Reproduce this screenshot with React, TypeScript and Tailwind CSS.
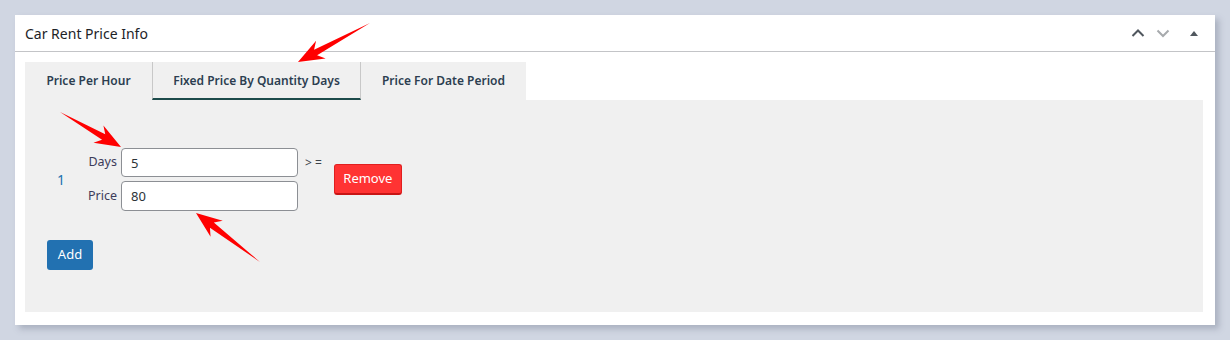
import React from "react";

function Arrow({ x1, y1, x2, y2 }: { x1: number; y1: number; x2: number; y2: number }) {
  const dx = x2 - x1;
  const dy = y2 - y1;
  const len = Math.sqrt(dx * dx + dy * dy);
  const ux = dx / len;
  const uy = dy / len;
  const px = -uy;
  const py = ux;
  const headLen = 26;
  const headW = 10;
  const shaftW = 3.2;
  const bx = x2 - ux * headLen;
  const by = y2 - uy * headLen;
  const nx = x2 - ux * (headLen - 6);
  const ny = y2 - uy * (headLen - 6);
  const pts = [
    [x1, y1],
    [nx + px * shaftW, ny + py * shaftW],
    [bx + px * headW, by + py * headW],
    [x2, y2],
    [bx - px * headW, by - py * headW],
    [nx - px * shaftW, ny - py * shaftW],
  ]
    .map((p) => p.join(","))
    .join(" ");
  return <polygon points={pts} fill="#ff0000" />;
}

export default function App() {
  return (
    <div
      className="relative w-[1230px] h-[340px] bg-[#d0d6e2] pt-[15px] pl-[15px]"
      style={{ fontFamily: '"Noto Sans", "Open Sans", sans-serif' }}
    >
      <div className="w-[1200px] h-[310px] bg-white shadow-[4px_4px_6px_rgba(100,110,130,0.35)] flex flex-col">
        <div className="h-[37px] border-b border-[#c3c4c7] flex items-center pl-[10px] pr-[16px]">
          <div className="text-[14px] text-[#1d2327] leading-none pt-[1px]">Car Rent Price Info</div>
          <div className="ml-auto flex items-center">
            <svg width="16" height="16" viewBox="0 0 16 16" className="mr-[9px]">
              <path d="M2.5 11 L8 5.5 L13.5 11" stroke="#50575e" strokeWidth="2" fill="none" />
            </svg>
            <svg width="16" height="16" viewBox="0 0 16 16" className="mr-[18px]">
              <path d="M2.5 5.5 L8 11 L13.5 5.5" stroke="#a7aaad" strokeWidth="2" fill="none" />
            </svg>
            <svg width="10" height="10" viewBox="0 0 10 10">
              <path d="M1 8 L5 3 L9 8 Z" fill="#50575e" />
            </svg>
          </div>
        </div>
        <div className="pt-[10px] pl-[10px] pr-[12px] pb-[13px] flex-1 flex flex-col">
          <div className="flex h-[38px]">
            <div className="w-[127px] bg-[#f0f0f0] flex items-center justify-center text-[12px] font-semibold text-[#2c3e50]">
              Price Per Hour
            </div>
            <div className="w-[209px] bg-[#f0f0f0] border-l border-r border-[#c8c8c8] border-b-2 border-b-[#1d4b4b] flex items-center justify-center text-[12px] font-semibold text-[#2c3e50] pt-[2px]">
              Fixed Price By Quantity Days
            </div>
            <div className="w-[165px] bg-[#f0f0f0] flex items-center justify-center text-[12px] font-semibold text-[#2c3e50]">
              Price For Date Period
            </div>
          </div>
          <div className="flex-1 bg-[#f0f0f0] pl-[22px] pt-[48px]">
            <div className="flex items-center">
              <div className="w-[30px] text-[14px] text-[#2271b1] pl-[10px]">1</div>
              <div className="flex flex-col gap-[4px]">
                <div className="flex items-center">
                  <span className="text-[12.5px] text-[#3c3c5a] w-[44px] text-right pr-[4px]">Days</span>
                  <input
                    defaultValue="5"
                    className="w-[177px] h-[29px] bg-white border border-[#8c8f94] rounded-[4px] px-[9px] text-[13px] text-[#2c3338] outline-none"
                  />
                  <span className="text-[12px] text-[#3c434a] ml-[7px]">&gt; =</span>
                </div>
                <div className="flex items-center">
                  <span className="text-[12.5px] text-[#3c3c5a] w-[44px] text-right pr-[4px]">Price</span>
                  <input
                    defaultValue="80"
                    className="w-[177px] h-[30px] bg-white border border-[#8c8f94] rounded-[4px] px-[9px] text-[13px] text-[#2c3338] outline-none"
                  />
                </div>
              </div>
              <button className="ml-[12px] w-[68px] h-[31px] bg-[#ff3333] border border-[#e01f1f] border-b-2 border-b-[#c81515] rounded-[3px] text-white text-[13px]">
                Remove
              </button>
            </div>
            <button className="mt-[29px] w-[46px] h-[30px] bg-[#2271b1] rounded-[3px] text-white text-[13px]">
              Add
            </button>
          </div>
        </div>
      </div>
      <svg className="absolute left-0 top-0 pointer-events-none" width="1230" height="340">
        <Arrow x1={370} y1={23} x2={298} y2={62} />
        <Arrow x1={60} y1={112} x2={121} y2={147} />
        <Arrow x1={260} y1={262} x2={196} y2={213} />
      </svg>
    </div>
  );
}
